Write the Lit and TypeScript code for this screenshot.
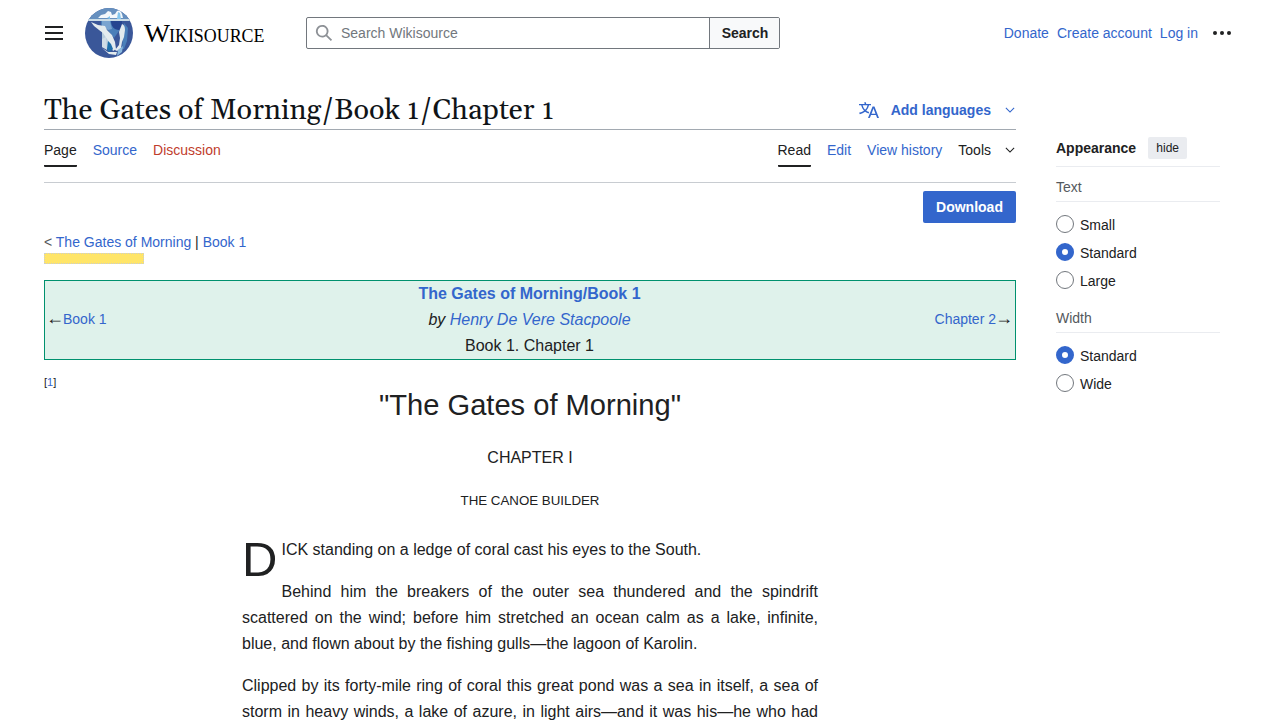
import { LitElement, html, css, svg } from "lit";
import { customElement, property } from "lit/decorators.js";

const chevron = svg`<path d="m17.5 4.75-7.5 7.5-7.5-7.5L1 6.25l9 9 9-9z" fill="currentColor"/>`;

@customElement("radio-option")
class RadioOption extends LitElement {
  @property() label = "";
  @property({ type: Boolean }) checked = false;
  static styles = css`
    :host { display: flex; height: 28px; align-items: flex-start; }
    .dot { box-sizing: border-box; width: 18px; height: 18px; border: 1px solid #72777d; border-radius: 50%; margin-right: 6px; background: #fff; }
    .on { border: 6px solid #36c; }
    .label { line-height: 20px; }
  `;
  render() {
    return html`<span class="dot ${this.checked ? "on" : ""}"></span><span class="label">${this.label}</span>`;
  }
}

@customElement("app-root")
class AppRoot extends LitElement {
  static styles = css`
    :host { display: block; height: 720px; overflow: hidden; background: #fff; color: #202122; font: 14px/22px "Liberation Sans", Arial, sans-serif; }
    a { color: #36c; text-decoration: none; }
    svg { display: block; flex: none; }
    header { display: flex; align-items: center; height: 66px; padding: 0 49px 0 45px; }
    .mark { margin-left: 22px; }
    .search { display: flex; box-sizing: border-box; width: 474px; height: 32px; margin-left: 36px; border: 1px solid #72777d; border-radius: 2px; overflow: hidden; }
    .field { flex: 1; display: flex; align-items: center; padding-left: 8px; gap: 8px; color: #72777d; }
    .go { display: flex; align-items: center; justify-content: center; width: 68px; padding-left: 1px; border-left: 1px solid #72777d; background: #f8f9fa; color: #202122; font-weight: 700; }
    .user { display: flex; gap: 8px; margin-left: auto; align-items: center; }
    .user svg { margin-left: 7px; }
    .columns { display: flex; gap: 40px; padding: 22px 60px 0 44px; }
    main { width: 972px; flex: none; }
    .title { display: flex; align-items: center; justify-content: space-between; height: 41px; border-bottom: 1px solid #a2a9b1; }
    h1 { margin: 0; padding-top: 4px; font: 400 28.8px/40px "Linux Libertine", Georgia, Gelasio, "Liberation Serif", serif; color: #101418; white-space: nowrap; }
    .lang { display: flex; align-items: center; font-weight: 700; color: #36c; padding: 3px 1px 0 0; }
    .lang span { margin: 0 14px 0 12px; }
    .tabs { display: flex; gap: 16px; height: 52px; border-bottom: 1px solid #c8ccd1; }
    .tab { height: 26px; line-height: 22px; padding-top: 9px; }
    .active { color: #202122; border-bottom: 2px solid #202122; border-radius: 0 0 1px 1px; }
    .red { color: #bf3c2c; }
    .push { margin-left: auto; }
    .tools { display: flex; gap: 14px; }
    .tools svg { margin: 6px 1px 0 0; }
    .download { display: flex; width: 93px; height: 32px; margin: 8px 0 0 auto; align-items: center; justify-content: center; background: #36c; color: #fff; border-radius: 2px; font-weight: 700; }
    .crumbs { margin-top: 9px; height: 21px; line-height: 21px; color: #54595d; }
    .crumbs i { font-style: normal; color: #202122; }
    .quality { box-sizing: border-box; width: 100px; height: 11px; background: #ffe568; border: 1px dotted #c8ccd1; }
    .nav { box-sizing: border-box; display: grid; grid-template-columns: 1fr auto 1fr; align-items: center; height: 80px; margin-top: 16px; padding: 0 3px 0 2px; border: 1px solid #00916e; background: #dff2eb; }
    .side { display: flex; align-items: center; padding-bottom: 2px; }
    .mid { text-align: center; font-size: 16px; line-height: 26px; }
    .next { justify-content: flex-end; }
    .arrow { font-size: 18px; line-height: 18px; margin: 0 -1px 2px; }
    .ref { font-size: 11px; line-height: 16px; margin-top: 14px; height: 11px; }
    .prose { width: 576px; margin: 0 auto; font-size: 16px; line-height: 26px; }
    .center { text-align: center; }
    h2 { margin: 0; font-size: 29.1px; font-weight: 400; line-height: 40px; }
    .chapter { margin-top: 20px; }
    .sub { margin-top: 17px; font-size: 13.3px; }
    p { margin: 16px 0 0; text-align: justify; }
    .first { margin-top: 23px; }
    .cut { text-align-last: justify; }
    .cap { float: left; font-size: 49px; line-height: 44px; width: 39.5px; }
    aside { width: 164px; padding-top: 45px; }
    .head { display: flex; align-items: center; gap: 12px; height: 30px; padding-bottom: 3px; border-bottom: 1px solid #eaecf0; font-weight: 700; }
    .hide { font-size: 12px; font-weight: 400; background: #eaecf0; border-radius: 2px; width: 39px; text-align: center; }
    .group { margin-top: 9px; padding-bottom: 3px; border-bottom: 1px solid #eaecf0; color: #54595d; margin-bottom: 13px; }
    .width { margin-top: 8px; }
  `;
  render() {
    return html`
      <header>
        <svg width="18" height="14" viewBox="0 0 18 14"><path d="M0 0h18v2H0zM0 6h18v2H0zM0 12h18v2H0z" fill="#202122"/></svg>
        <svg class="mark" width="185" height="50" viewBox="0 0 185 50">
          <clipPath id="disc"><ellipse cx="24" cy="25" rx="24" ry="25"/></clipPath>
          <g clip-path="url(#disc)">
            <path fill="#3a5799" d="M0 0h48v50H0z"/>
            <path fill="#6690bf" d="M0 0h48v12H0z"/>
            <path fill="#4a7fb9" d="M16 13h20l-2 10-5 7-7-9-6-4z"/>
            <path fill="#79a4d0" d="M17 13h8l2 8-4 1-6-4z"/>
            <path fill="#274690" d="M26 13h11v5l-3 4c-5 0-8-4-8-9z"/>
            <path fill="#4a7fb9" d="M39 15l4 5-1 13-3 8h-2z"/>
            <path fill="#f3f8fb" d="M13 10l3-3 4-1 3-3 3 1 1 3 3-1 2-3 3-1 2 4 1 4z"/>
            <path fill="#83c5ed" d="M22 10l3-2v3zM33 4l2 1 1 6h-4z"/>
            <path fill="#b8cddd" d="M17 21l5 2 3 8-2 10-6-2z"/>
            <path fill="#d0dce6" d="M17 31l4-2 1 13-5-3z"/>
            <path fill="#e3ebee" d="M6 14l7 3 7 1 2 4 5 5 3 7 1 7-3 2-4-9-6-9-4-3-5-4zM37 16q3 1 3 6l-1 7-2 5-1 6-4 3-2-1 4-5 1-7-1-6z"/>
            <path fill="#1f70ab" d="M23 33l3 3 2 5-4 3-2-3z"/>
            <path fill="#e3ebee" d="M17 40l6 4 9 0-1 3-7-1z"/>
            <path fill="#8ab9df" d="M33 42l5-4-1 6-5 4z"/>
            <path fill="#cbdde6" d="M0 11h48v2H0z"/>
          </g>
          <g fill="#000" font-family="Liberation Serif, serif">
            <text x="59" y="33.5" font-size="25" textLength="26" lengthAdjust="spacingAndGlyphs">W</text>
            <text x="84" y="33.5" font-size="18.5" textLength="95.5" lengthAdjust="spacingAndGlyphs">IKISOURCE</text>
          </g>
        </svg>
        <div class="search">
          <div class="field">
            <svg width="18" height="18" viewBox="0 0 20 20"><path fill="#8d9196" d="M12.2 13.6a7 7 0 1 1 1.4-1.4l5.4 5.4-1.4 1.4zM3 8a5 5 0 1 0 10 0A5 5 0 0 0 3 8"/></svg>
            <span>Search Wikisource</span>
          </div>
          <div class="go">Search</div>
        </div>
        <div class="user"><a>Donate</a><a>Create account</a><a>Log in</a>
          <svg width="18" height="6" viewBox="0 0 18 6" fill="#202122"><circle cx="2" cy="3" r="2"/><circle cx="9" cy="3" r="2"/><circle cx="16" cy="3" r="2"/></svg>
        </div>
      </header>
      <div class="columns">
        <main>
          <div class="title">
            <h1>The Gates of Morning/Book 1/Chapter 1</h1>
            <div class="lang">
              <svg width="20" height="20" viewBox="0 0 20 20"><path fill="currentColor" d="M20 18h-1.44a.6.6 0 0 1-.4-.12.8.8 0 0 1-.23-.31L17 15h-5l-1 2.54a.8.8 0 0 1-.22.3.6.6 0 0 1-.4.14H9l4.55-11.47h1.89zm-3.53-4.31L14.89 9.5a12 12 0 0 1-.39-1.24q-.09.37-.19.69l-.19.56-1.58 4.19zm-6.3-1.58a13.4 13.4 0 0 1-2.91-1.41 11.46 11.46 0 0 0 2.81-5.37H12V4H7.31a4 4 0 0 0-.2-.56C6.87 2.79 6.6 2 6.6 2l-1.47.5s.4.89.6 1.5H0v1.33h2.15A11.23 11.23 0 0 0 5 10.7a17.2 17.2 0 0 1-5 2.1q.56.82.87 1.38a23.3 23.3 0 0 0 5.22-2.51 15.6 15.6 0 0 0 3.56 1.77zM3.63 5.33h4.91a8.1 8.1 0 0 1-2.45 4.45 9.1 9.1 0 0 1-2.46-4.45"/></svg>
              <span>Add languages</span>
              <svg width="10" height="10" viewBox="0 0 20 20">${chevron}</svg>
            </div>
          </div>
          <nav class="tabs">
            <a class="tab active">Page</a><a class="tab">Source</a><a class="tab red">Discussion</a>
            <a class="tab active push">Read</a><a class="tab">Edit</a><a class="tab">View history</a>
            <div class="tab tools">Tools<svg width="10" height="10" viewBox="0 0 20 20">${chevron}</svg></div>
          </nav>
          <a class="download">Download</a>
          <div class="crumbs">&lt; <a>The Gates of Morning</a> <i>|</i> <a>Book 1</a></div>
          <div class="quality"></div>
          <div class="nav">
            <div class="side"><span class="arrow">←</span><a>Book 1</a></div>
            <div class="mid"><b><a>The Gates of Morning/Book 1</a></b><br><em>by <a>Henry De Vere Stacpoole</a></em><br>Book 1. Chapter 1</div>
            <div class="side next"><a>Chapter 2</a><span class="arrow">→</span></div>
          </div>
          <div class="ref">[<a>1</a>]</div>
          <article class="prose">
            <h2 class="center">"The Gates of Morning"</h2>
            <div class="center chapter">CHAPTER I</div>
            <div class="center sub">THE CANOE BUILDER</div>
            <p class="first"><span class="cap">D</span>ICK standing on a ledge of coral cast his eyes to the South.</p>
            <p>Behind him the breakers of the outer sea thundered and the spindrift scattered on the wind; before him stretched an ocean calm as a lake, infinite, blue, and flown about by the fishing gulls—the lagoon of Karolin.</p>
            <p class="cut">Clipped by its forty-mile ring of coral this great pond was a sea in itself, a sea of storm in heavy winds, a lake of azure, in light airs—and it was his—he who had</p>
          </article>
        </main>
        <aside>
          <div class="head">Appearance<span class="hide">hide</span></div>
          <div class="group">Text</div>
          <radio-option label="Small"></radio-option>
          <radio-option label="Standard" checked></radio-option>
          <radio-option label="Large"></radio-option>
          <div class="group width">Width</div>
          <radio-option label="Standard" checked></radio-option>
          <radio-option label="Wide"></radio-option>
        </aside>
      </div>`;
  }
}
